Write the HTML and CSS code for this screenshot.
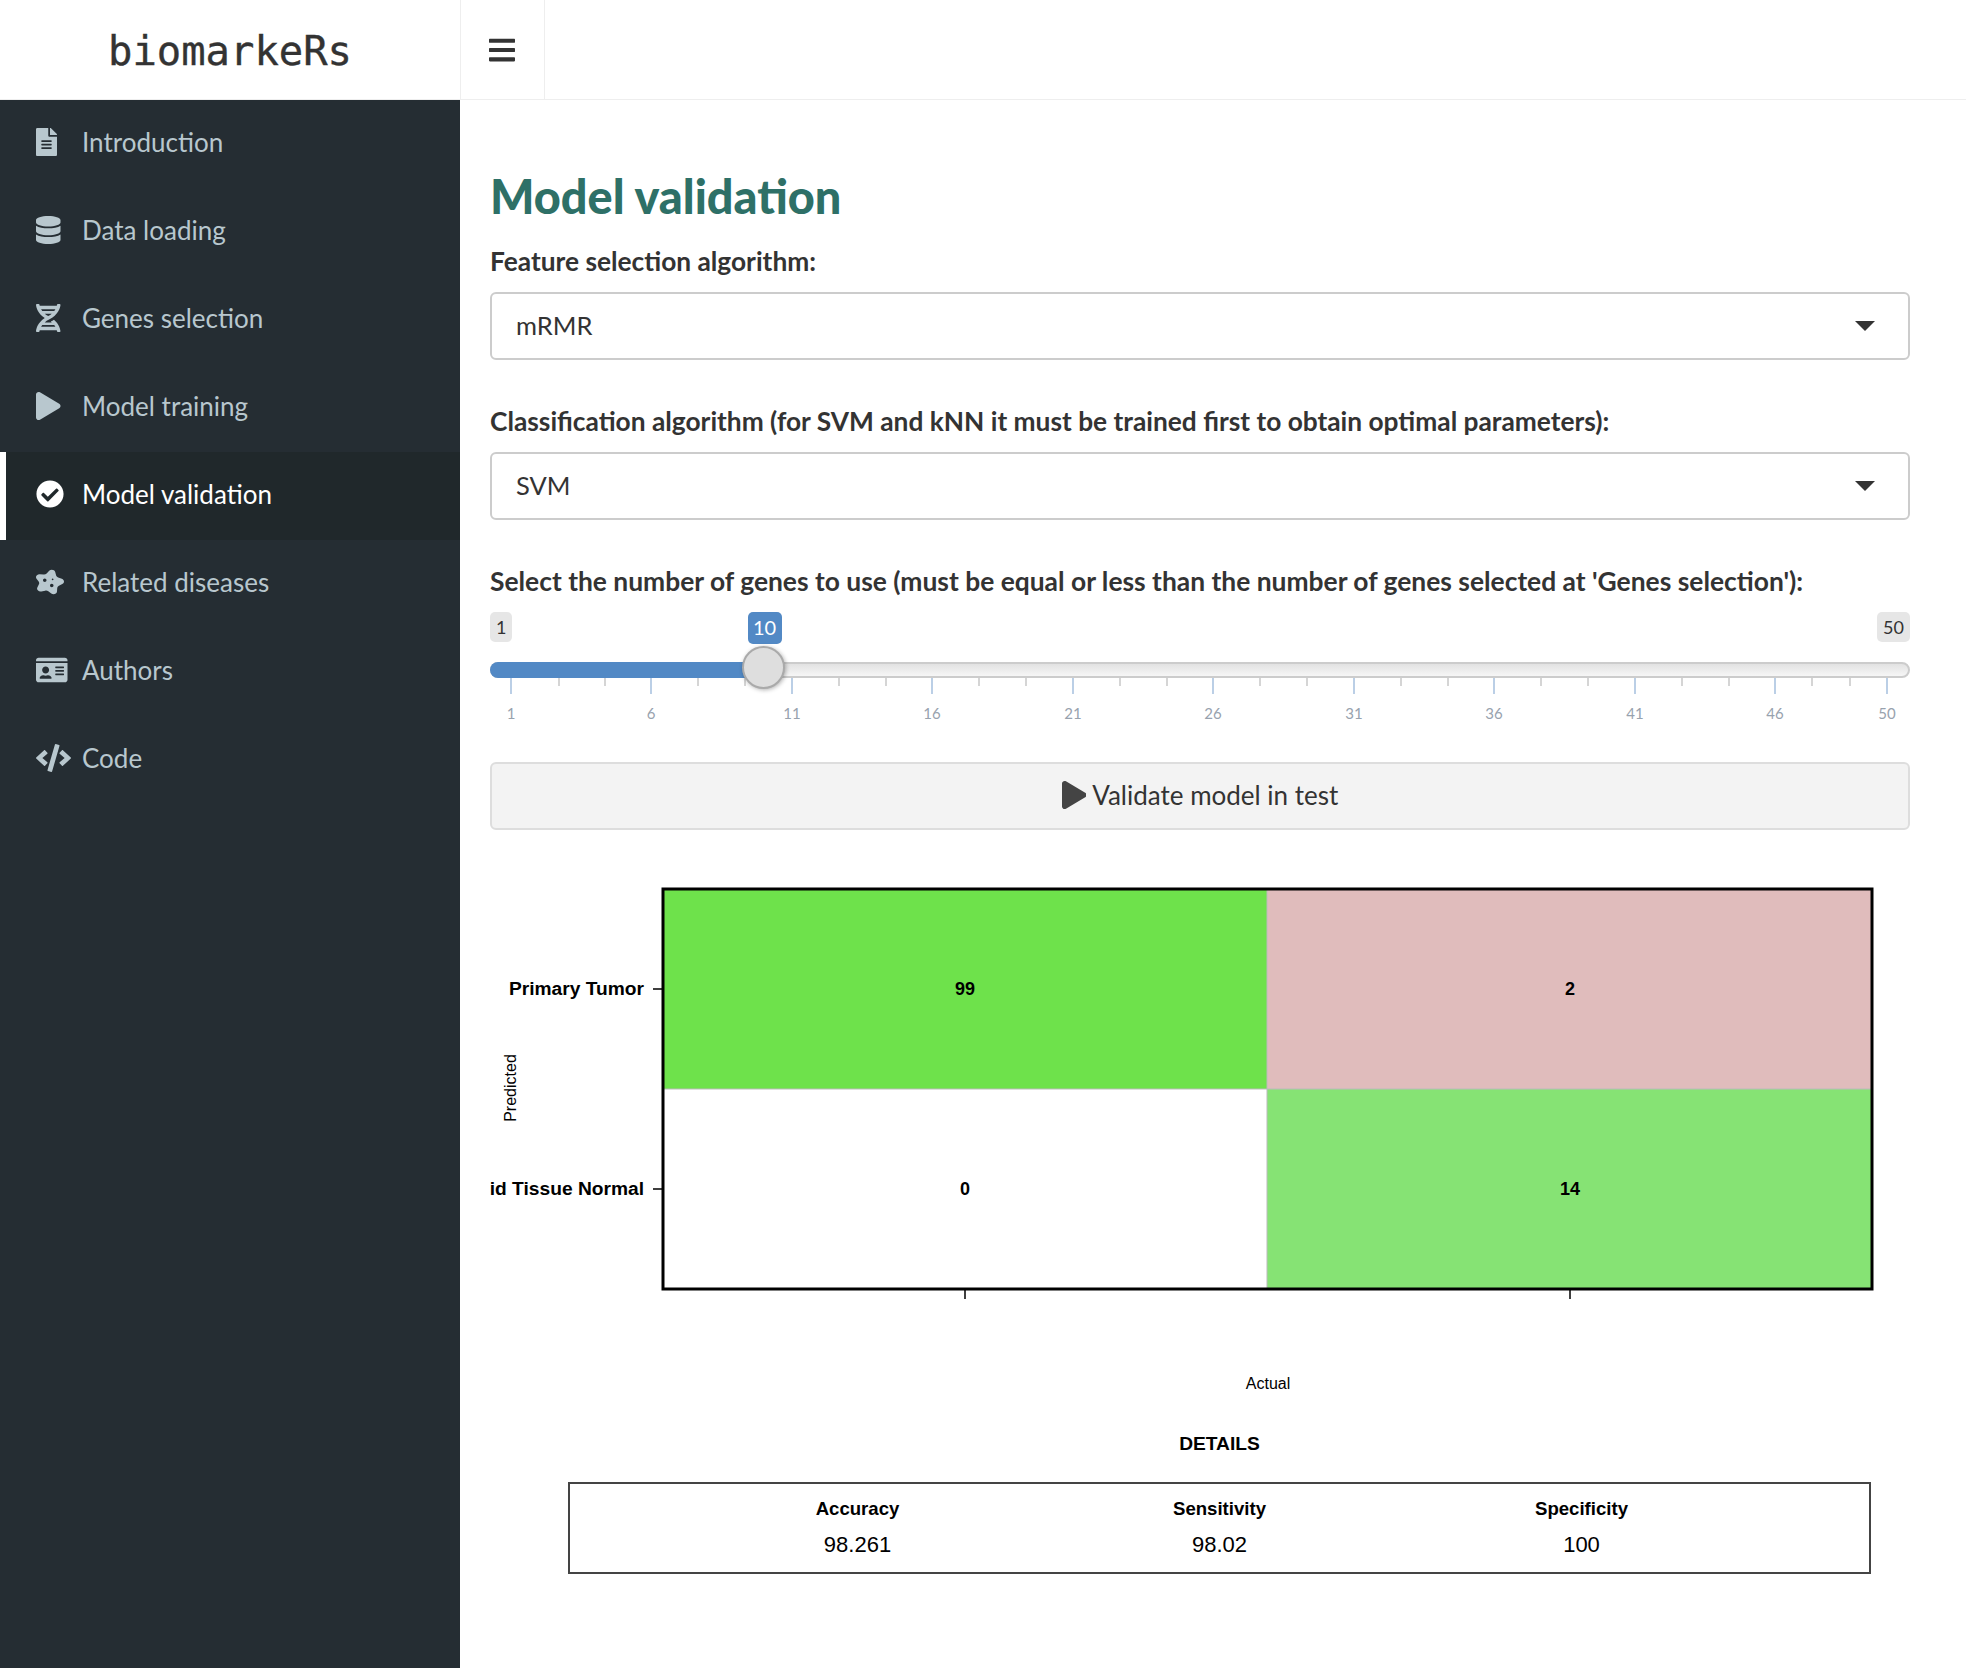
FILE: index.html
```html
<!DOCTYPE html>
<html>
<head>
  <title>biomarkeRs</title>
  <link rel="stylesheet" href="styles.css">
</head>
<body>
  <header class="topbar">
    <div class="logo">biomarkeRs</div>
    <div class="toggle">
      <svg class="toggle-icon" viewBox="0 0 448 512"><path d="M16 132h416c8.837 0 16-7.163 16-16V76c0-8.837-7.163-16-16-16H16C7.163 60 0 67.163 0 76v40c0 8.837 7.163 16 16 16zm0 160h416c8.837 0 16-7.163 16-16v-40c0-8.837-7.163-16-16-16H16c-8.837 0-16 7.163-16 16v40c0 8.837 7.163 16 16 16zm0 160h416c8.837 0 16-7.163 16-16v-40c0-8.837-7.163-16-16-16H16c-8.837 0-16 7.163-16 16v40c0 8.837 7.163 16 16 16z"/></svg>
    </div>
  </header>

  <div class="wrapper">
    <nav class="sidebar">
      <a class="nav-item">
        <span class="nav-icon"><svg viewBox="0 0 384 512"><path d="M224 136V0H24C10.7 0 0 10.7 0 24v464c0 13.3 10.7 24 24 24h336c13.3 0 24-10.7 24-24V160H248c-13.2 0-24-10.8-24-24zm64 236c0 6.6-5.4 12-12 12H108c-6.6 0-12-5.4-12-12v-8c0-6.6 5.4-12 12-12h168c6.6 0 12 5.4 12 12v8zm0-64c0 6.6-5.4 12-12 12H108c-6.6 0-12-5.4-12-12v-8c0-6.6 5.4-12 12-12h168c6.6 0 12 5.4 12 12v8zm0-72v8c0 6.6-5.4 12-12 12H108c-6.6 0-12-5.4-12-12v-8c0-6.6 5.4-12 12-12h168c6.6 0 12 5.4 12 12zm96-114.1v6.1H256V0h6.1c6.4 0 12.5 2.5 17 7l97.9 98c4.5 4.5 7 10.6 7 16.9z"/></svg></span>
        Introduction
      </a>
      <a class="nav-item">
        <span class="nav-icon"><svg viewBox="0 0 448 512"><path d="M448 73.143v45.714C448 159.143 347.667 192 224 192S0 159.143 0 118.857V73.143C0 32.857 100.333 0 224 0s224 32.857 224 73.143zM448 176v102.857C448 319.143 347.667 352 224 352S0 319.143 0 278.857V176c48.125 33.143 136.208 48.572 224 48.572S399.874 209.143 448 176zm0 160v102.857C448 479.143 347.667 512 224 512S0 479.143 0 438.857V336c48.125 33.143 136.208 48.572 224 48.572S399.874 369.143 448 336z"/></svg></span>
        Data loading
      </a>
      <a class="nav-item">
        <span class="nav-icon"><svg viewBox="0 0 448 512"><path d="M.1 494.1c-1.1 9.5 6.3 17.8 15.9 17.8l32.3.1c8.1 0 14.9-5.9 16-13.9.7-4.9 1.8-11.1 3.4-18.1H380c1.6 6.9 2.9 13.2 3.5 18.1 1.1 8 7.9 14 16 13.9l32.3-.1c9.6 0 17.1-8.3 15.9-17.8-4.6-37.9-25.6-129-118.9-207.7-17.6 12.4-37.1 24.2-58.5 35.4 6.2 4.6 11.4 9.4 17 14.2H159.7c21.3-18.1 47-35.6 78.7-51.4C410.5 199.1 442.1 65.8 447.9 17.9 449 8.4 441.6.1 432 .1L399.6 0c-8.1 0-14.9 5.9-16 13.9-.7 4.9-1.8 11.1-3.4 18.1H67.8c-1.6-7-2.7-13.1-3.4-18.1-1.1-8-7.9-14-16-13.9L16.1.1C6.5.1-1 8.4.1 17.9 5.3 60.8 31.4 171.8 160 256 31.5 340.2 5.3 451.2.1 494.1zM224 219.6c-25.1-13.7-46.4-28.4-64.3-43.6h128.5c-17.8 15.2-39.1 30-64.2 43.6zM355.1 96c-5.8 10.4-12.8 21.1-21 32H114c-8.3-10.9-15.3-21.6-21-32h262.1zM92.9 416c5.8-10.4 12.8-21.1 21-32h219.4c8.3 10.9 15.4 21.6 21.2 32H92.9z"/></svg></span>
        Genes selection
      </a>
      <a class="nav-item">
        <span class="nav-icon"><svg viewBox="0 0 448 512"><path d="M424.4 214.7L72.4 6.6C43.8-10.3 0 6.1 0 47.9V464c0 37.5 40.7 60.1 72.4 41.3l352-208c31.4-18.5 31.5-64.1 0-82.6z"/></svg></span>
        Model training
      </a>
      <a class="nav-item active">
        <span class="nav-icon"><svg viewBox="0 0 512 512"><path d="M504 256c0 136.967-111.033 248-248 248S8 392.967 8 256 119.033 8 256 8s248 111.033 248 248zM227.314 387.314l184-184c6.248-6.248 6.248-16.379 0-22.627l-22.627-22.627c-6.248-6.249-16.379-6.249-22.628 0L216 308.118l-70.059-70.059c-6.248-6.248-16.379-6.248-22.628 0l-22.627 22.627c-6.248 6.248-6.248 16.379 0 22.627l104 104c6.249 6.249 16.379 6.249 22.628.001z"/></svg></span>
        Model validation
      </a>
      <a class="nav-item">
        <span class="nav-icon"><svg viewBox="0 0 512 512"><path d="M472.29 195.9l-67.06-23c-19.28-6.6-33.54-20.92-38.14-38.31L351.1 74.19c-11.58-43.77-76.57-57.13-109.98-22.62l-46.14 47.67c-13.26 13.71-33.54 20.93-54.2 19.31l-71.88-5.62c-52.05-4.07-86.93 44.88-59.03 82.83l38.57 52.42c11.08 15.05 12.82 33.86 4.64 50.24L24.62 355.4c-20.59 41.25 22.84 84.87 73.49 73.81l69.96-15.28c20.11-4.39 41.45 0 57.07 11.73l54.32 40.83c39.32 29.56 101.04 7.57 104.45-37.22l4.7-61.86c1.35-17.79 12.8-33.86 30.63-42.99l62-31.74c44.88-22.96 39.59-80.17-8.95-96.78zM160 256c-17.67 0-32-14.33-32-32s14.33-32 32-32 32 14.33 32 32-14.33 32-32 32zm128 96c-17.67 0-32-14.33-32-32s14.33-32 32-32 32 14.33 32 32-14.33 32-32 32zm16-128c-8.84 0-16-7.16-16-16s7.16-16 16-16 16 7.16 16 16-7.16 16-16 16z"/></svg></span>
        Related diseases
      </a>
      <a class="nav-item">
        <span class="nav-icon"><svg viewBox="0 0 576 512"><path d="M528 32H48C21.5 32 0 53.5 0 80v16h576V80c0-26.5-21.5-48-48-48zM0 432c0 26.5 21.5 48 48 48h480c26.5 0 48-21.5 48-48V128H0v304zm352-232c0-4.4 3.6-8 8-8h144c4.4 0 8 3.6 8 8v16c0 4.4-3.6 8-8 8H360c-4.4 0-8-3.6-8-8v-16zm0 64c0-4.4 3.6-8 8-8h144c4.4 0 8 3.6 8 8v16c0 4.4-3.6 8-8 8H360c-4.4 0-8-3.6-8-8v-16zm0 64c0-4.4 3.6-8 8-8h144c4.4 0 8 3.6 8 8v16c0 4.4-3.6 8-8 8H360c-4.4 0-8-3.6-8-8v-16zM176 192c35.3 0 64 28.7 64 64s-28.7 64-64 64-64-28.7-64-64 28.7-64 64-64zM67.1 396.2C75.5 370.5 99.6 352 128 352h8.2c12.3 5.1 25.7 8 39.8 8s27.6-2.9 39.8-8h8.2c28.4 0 52.5 18.5 60.9 44.2 3.2 9.9-5.2 19.8-15.6 19.8H82.7c-10.4 0-18.8-10-15.6-19.8z"/></svg></span>
        Authors
      </a>
      <a class="nav-item">
        <span class="nav-icon"><svg viewBox="0 0 640 512"><path d="M278.9 511.5l-61-17.7c-6.4-1.8-10-8.5-8.2-14.9L346.2 8.7c1.8-6.4 8.5-10 14.9-8.2l61 17.7c6.4 1.8 10 8.5 8.2 14.9L293.8 503.3c-1.9 6.4-8.5 10.1-14.9 8.2zm-114-112.2l43.5-46.4c4.6-4.9 4.3-12.7-.8-17.2L117 256l90.6-79.7c5.1-4.5 5.5-12.3.8-17.2l-43.5-46.4c-4.5-4.8-12.1-5.1-17-.5L3.8 247.2c-5.1 4.7-5.1 12.8 0 17.5l144.1 135.1c4.9 4.6 12.5 4.4 17-.5zm327.2.6l144.1-135.1c5.1-4.7 5.1-12.8 0-17.5L492.1 112.1c-4.8-4.5-12.4-4.3-17 .5L431.6 159c-4.6 4.9-4.3 12.7.8 17.2L523 256l-90.6 79.7c-5.1 4.5-5.5 12.3-.8 17.2l43.5 46.4c4.5 4.9 12.1 5.1 17 .6z"/></svg></span>
        Code
      </a>
    </nav>

    <main class="content">
      <h2 class="page-title">Model validation</h2>

      <label class="field-label">Feature selection algorithm:</label>
      <div class="select-box">mRMR<span class="caret"></span></div>

      <label class="field-label">Classification algorithm (for SVM and kNN it must be trained first to obtain optimal parameters):</label>
      <div class="select-box">SVM<span class="caret"></span></div>

      <label class="field-label wide">Select the number of genes to use (must be equal or less than the number of genes selected at 'Genes selection'):</label>
      <div class="slider">
        <div class="slider-labels">
          <span class="slider-end">1</span>
          <span class="slider-end">50</span>
        </div>
        <span class="slider-value">10</span>
        <div class="slider-track">
          <div class="slider-fill"></div>
        </div>
        <span class="slider-thumb"></span>
        <svg class="slider-grid" width="1419" height="50">
          <path class="tick-minor" d="M69 0v8M115 0v8M208 0v8M255 0v8M349 0v8M396 0v8M489 0v8M536 0v8M630 0v8M677 0v8M770 0v8M817 0v8M911 0v8M958 0v8M1051 0v8M1098 0v8M1192 0v8M1239 0v8M1322 0v8M1360 0v8"/>
          <path class="tick-major" d="M21 0v16M161 0v16M302 0v16M442 0v16M583 0v16M723 0v16M864 0v16M1004 0v16M1145 0v16M1285 0v16M1397 0v16"/>
          <g class="grid-text">
            <text x="21" y="41">1</text>
            <text x="161" y="41">6</text>
            <text x="302" y="41">11</text>
            <text x="442" y="41">16</text>
            <text x="583" y="41">21</text>
            <text x="723" y="41">26</text>
            <text x="864" y="41">31</text>
            <text x="1004" y="41">36</text>
            <text x="1145" y="41">41</text>
            <text x="1285" y="41">46</text>
            <text x="1397" y="41">50</text>
          </g>
        </svg>
      </div>

      <button class="run-button">
        <svg class="run-icon" viewBox="0 0 448 512"><path d="M424.4 214.7L72.4 6.6C43.8-10.3 0 6.1 0 47.9V464c0 37.5 40.7 60.1 72.4 41.3l352-208c31.4-18.5 31.5-64.1 0-82.6z"/></svg>
        Validate model in test
      </button>

      <svg class="plot" width="1420" height="540">
        <rect x="173" y="28" width="604" height="200" fill="#6ee24b"/>
        <rect x="777" y="28" width="605" height="200" fill="#e0bcbc"/>
        <rect x="173" y="228" width="604" height="200" fill="#ffffff"/>
        <rect x="777" y="228" width="605" height="200" fill="#86e374"/>
        <path class="plot-sep" d="M173 228H1382M777 28V428"/>
        <rect class="plot-frame" x="173" y="28" width="1209" height="400"/>
        <path class="plot-tick" d="M163 128h10M163 328h10M475 428v10M1080 428v10"/>
        <g class="plot-axis">
          <text x="154" y="134">Primary Tumor</text>
          <text x="154" y="334">id Tissue Normal</text>
        </g>
        <g class="plot-count">
          <text x="475" y="134">99</text>
          <text x="1080" y="134">2</text>
          <text x="475" y="334">0</text>
          <text x="1080" y="334">14</text>
        </g>
        <text class="plot-title" x="778" y="528">Actual</text>
        <text class="plot-title" transform="translate(26 227) rotate(-90)">Predicted</text>
      </svg>

      <div class="details">
        <div class="details-title">DETAILS</div>
        <div class="details-box">
          <div class="metric"><b>Accuracy</b><span>98.261</span></div>
          <div class="metric"><b>Sensitivity</b><span>98.02</span></div>
          <div class="metric"><b>Specificity</b><span>100</span></div>
        </div>
      </div>
    </main>
  </div>
</body>
</html>
```

FILE: styles.css
```css
body {
  margin: 0;
  font-family: Lato, "Noto Sans", sans-serif;
  color: #333;
  background-color: #fff;
}

/* top bar */
.topbar {
  display: flex;
  height: 100px;
  box-sizing: border-box;
  border-bottom: 1px solid #eee;
}

.logo {
  width: 460px;
  text-align: center;
  font-family: "DejaVu Sans Mono", monospace;
  font-size: 40.5px;
  line-height: 102px;
  color: #333;
  -webkit-text-stroke: 0.4px #333;
}

.toggle {
  display: flex;
  align-items: center;
  justify-content: center;
  width: 85px;
  padding-right: 2px;
  border-left: 1px solid #eee;
  border-right: 1px solid #eee;
  box-sizing: border-box;
}

.toggle-icon {
  width: 26px;
  height: 30px;
  fill: #333;
}

/* sidebar */
.wrapper {
  display: flex;
  min-height: 1568px;
}

.sidebar {
  width: 460px;
  flex-shrink: 0;
  background-color: #252d33;
}

.nav-item {
  display: flex;
  align-items: center;
  height: 88px;
  box-sizing: border-box;
  padding-left: 36px;
  padding-bottom: 4px;
  font-size: 26px;
  color: #b8c7ce;
}

.nav-item.active {
  padding-left: 30px;
  border-left: 6px solid #fff;
  background-color: #20282b;
  color: #fff;
}

.nav-icon {
  display: flex;
  width: 46px;
  flex-shrink: 0;
}

.nav-icon svg {
  height: 28px;
  fill: currentColor;
}

/* form area */
.content {
  flex: 1;
  min-width: 0;
  padding: 60px 56px 0 30px;
}

.page-title {
  margin: 0;
  height: 72px;
  font-size: 46.8px;
  line-height: 72px;
  font-weight: 900;
  color: #2e7067;
}

.field-label {
  display: block;
  margin-top: 10px;
  margin-bottom: 12px;
  font-size: 26.3px;
  line-height: 38px;
  font-weight: 700;
}

.field-label.wide {
  font-size: 26.4px;
}

.select-box {
  display: flex;
  align-items: center;
  justify-content: space-between;
  height: 68px;
  box-sizing: border-box;
  margin-bottom: 42px;
  padding: 0 33px 3px 24px;
  border: 2px solid #ccc;
  border-radius: 6px;
  font-size: 25.5px;
}

.caret {
  width: 0;
  height: 0;
  margin-top: 3px;
  border-left: 10px solid transparent;
  border-right: 10px solid transparent;
  border-top: 10px solid #333;
}

/* range slider */
.slider {
  position: relative;
  height: 162px;
  margin-top: -12px;
}

.slider-labels {
  display: flex;
  justify-content: space-between;
  padding-top: 12px;
}

.slider-end {
  padding: 0 6px;
  border-radius: 5px;
  background-color: #e6e6e6;
  font-size: 18px;
  line-height: 30px;
}

.slider-value {
  position: absolute;
  left: 258px;
  top: 12px;
  padding: 0 6px 2px 5px;
  border-radius: 5px;
  background-color: #5289c5;
  color: #fff;
  font-size: 20px;
  line-height: 30px;
}

.slider-track {
  height: 16px;
  margin-top: 20px;
  box-sizing: border-box;
  border: 2px solid #ccc;
  border-radius: 8px;
  background: linear-gradient(#e2e2e2, #f6f6f6);
}

.slider-fill {
  width: 270px;
  height: 16px;
  margin: -2px;
  border-radius: 8px 0 0 8px;
  background-color: #5289c5;
}

.slider-thumb {
  position: absolute;
  left: 252px;
  top: 46px;
  width: 43px;
  height: 43px;
  box-sizing: border-box;
  border: 2px solid #aaa;
  border-radius: 50%;
  background-color: #dedede;
  box-shadow: 1px 1px 4px rgba(0, 0, 0, 0.3);
}

.slider-grid {
  display: block;
}

.tick-minor {
  stroke: #c8c8c8;
  stroke-width: 1.5;
}

.tick-major {
  stroke: #a5c0de;
  stroke-width: 1.5;
}

.grid-text {
  font-size: 15px;
  fill: #98a2ae;
  text-anchor: middle;
}

/* button */
.run-button {
  display: flex;
  align-items: center;
  justify-content: center;
  gap: 6px;
  width: 100%;
  height: 68px;
  padding-bottom: 3px;
  border: 2px solid #ddd;
  border-radius: 6px;
  background-color: #f3f3f3;
  font-family: inherit;
  font-size: 26px;
  color: #333;
}

.run-icon {
  height: 28px;
  fill: #444;
}

/* confusion matrix */
.plot {
  display: block;
  margin-top: 31px;
  font-family: "Liberation Sans", Arial, sans-serif;
}

.plot-sep {
  stroke: #bbb;
  stroke-width: 1;
  fill: none;
}

.plot-frame {
  fill: none;
  stroke: #000;
  stroke-width: 3;
}

.plot-tick {
  stroke: #000;
  stroke-width: 1.5;
  fill: none;
}

.plot-axis {
  font-size: 19.2px;
  font-weight: 700;
  text-anchor: end;
}

.plot-count {
  font-size: 18px;
  font-weight: 700;
  text-anchor: middle;
}

.plot-title {
  font-size: 16px;
  text-anchor: middle;
}

/* details table */
.details {
  margin: 28px 39px 0 78px;
  font-family: "Liberation Sans", Arial, sans-serif;
  color: #000;
}

.details-title {
  text-align: center;
  font-size: 19.2px;
  font-weight: 700;
  line-height: 30px;
}

.details-box {
  display: flex;
  justify-content: center;
  height: 92px;
  box-sizing: border-box;
  margin-top: 23px;
  padding-top: 14px;
  border: 2px solid #444;
}

.metric {
  display: flex;
  flex-direction: column;
  align-items: center;
  gap: 12px;
  width: 362px;
  font-size: 18.6px;
}

.metric span {
  font-size: 22px;
}
```
